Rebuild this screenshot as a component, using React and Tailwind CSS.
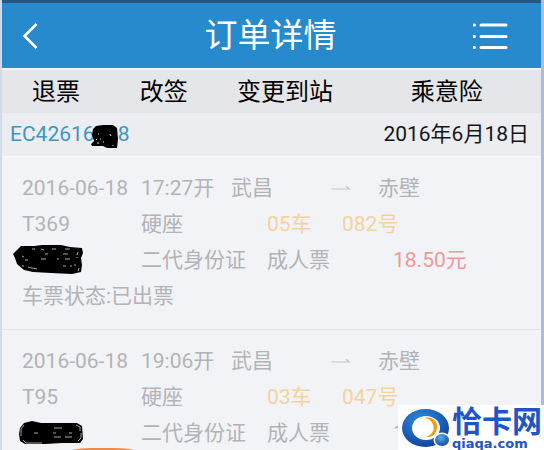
const actions = ["退票", "改签", "变更到站", "乘意险"];

const tickets = [
    {
        date: "2016-06-18",
        time: "17:27开",
        from: "武昌",
        to: "赤壁",
        train: "T369",
        seatType: "硬座",
        coach: "05车",
        seat: "082号",
        idType: "二代身份证",
        passenger: "成人票",
        price: "18.50元",
        status: "车票状态:已出票",
    },
    {
        date: "2016-06-18",
        time: "19:06开",
        from: "武昌",
        to: "赤壁",
        train: "T95",
        seatType: "硬座",
        coach: "03车",
        seat: "047号",
        idType: "二代身份证",
        passenger: "成人票",
        price: "1",
    },
];

const Arrow = () => (
    <svg className="w-5 h-2" viewBox="0 0 20 8" fill="none" stroke="#c3c4c7" strokeWidth="1.2">
        <path d="M0.5 5H18.5L15 2.2" />
    </svg>
);

// Hand-scribbled covers over private details
const NameCoverLong = () => (
    <svg className="w-[72px] h-8 -ml-[10px]" viewBox="0 0 72 32">
        <path
            d="M1 10L5 6L9 2L22 2L30 1L49 1L58 3L70 4L71 9L69 14L70 21L69 28L60 30L39 29L21 28L12 26L5 20L3 14Z"
            fill="#000"
        />
        <path
            d="M20 5h3M29 5l3 1M40 5h4M53 5h5M33 10h3M51 10h5M10 12l2 1M29 15h5M45 15h2M53 15h5M13 16h3M16 23l4 1l5 1M51 22h3M58 22h2M66 8l-1 3M65 13v1M63 20v2M67 24l-1 3M10 22h2"
            stroke="#a5a5a5"
            strokeWidth="1"
            fill="none"
        />
    </svg>
);

const NameCoverShort = () => (
    <svg className="w-16 h-6 -ml-[3px]" viewBox="0 0 64 24">
        <path
            d="M1 7L5 2L13 0L22 2L58 2L63 5L64 18L61 22L43 22L26 23L6 23L1 20L0 13Z"
            fill="#000"
        />
        <path
            d="M5 4L2 8V15M4 19L7 22H23M15 12h4M35 7h8M34 12h3M35 16h7M46 16h7M50 12h3M57 4l4 2v4M62 12v5l-3 3"
            stroke="#a5a5a5"
            strokeWidth="1"
            fill="none"
        />
    </svg>
);

const CodeCover = () => (
    <svg className="w-[28px] h-6 -ml-1 -mr-px mt-1" viewBox="0 0 28 24">
        <path d="M2 4L5 1L12 0L22 0L26 3L27 14L26 23L16 23L12 21L1 21L0 19L3 16L1 10Z" fill="#000" />
        <path d="M7 9h1M19 9l1 2M5 14l1 1M9 14h1M6 18h2M12 17h1M22 20v1" stroke="#e5e5e5" strokeWidth="1" />
    </svg>
);

const Ticket = ({ ticket, cover }) => (
    <section className="pt-[13px] pl-5 text-[21px] leading-9 text-[#b2b3b6]">
        <div className="flex h-9 items-center">
            <span className="w-[119px] shrink-0">{ticket.date}</span>
            <span className="w-[90px] shrink-0">{ticket.time}</span>
            <span className="w-[100px] shrink-0">{ticket.from}</span>
            <span className="w-[47px] shrink-0">
                <Arrow />
            </span>
            <span>{ticket.to}</span>
        </div>
        <div className="flex h-9 items-center">
            <span className="w-[119px] shrink-0">{ticket.train}</span>
            <span className="w-[126px] shrink-0">{ticket.seatType}</span>
            <span className="w-[75px] shrink-0 text-[#f3d39c]">{ticket.coach}</span>
            <span className="text-[#f3d39c]">{ticket.seat}</span>
        </div>
        <div className="flex h-9 items-center">
            <span className="w-[119px] shrink-0">{cover}</span>
            <span className="w-[126px] shrink-0">{ticket.idType}</span>
            <span className="w-[126px] shrink-0">{ticket.passenger}</span>
            <span className={ticket.status ? "text-[#ea9a98]" : "text-[#b2b3b6]"}>{ticket.price}</span>
        </div>
        {ticket.status && <p>{ticket.status}</p>}
    </section>
);

const SiteMark = () => (
    <div className="absolute right-0 bottom-0 flex h-[45px] items-center bg-white pl-1 pr-[2px]">
        <svg className="w-[50px] h-10" viewBox="0 0 50 40">
            <defs>
                <radialGradient id="ring" cx="0.4" cy="0.3" r="0.75">
                    <stop offset="0" stopColor="#2f8ad8" />
                    <stop offset="0.6" stopColor="#1c5fb8" />
                    <stop offset="1" stopColor="#123f93" />
                </radialGradient>
                <radialGradient id="ball" cx="0.4" cy="0.3" r="0.7">
                    <stop offset="0" stopColor="#54b0ea" />
                    <stop offset="1" stopColor="#124c9f" />
                </radialGradient>
            </defs>
            <ellipse cx="23.5" cy="20" rx="23.5" ry="19" fill="url(#ring)" />
            <ellipse cx="24" cy="20" rx="14" ry="12" fill="#fff" />
            <path d="M22 10C30 8 36 13 35 20C34.5 26 30 29.5 24 29C30 27 32.500 22 31.500 18C30.500 13.500 27 10.500 22 10Z" fill="#f39a16" />
            <ellipse cx="40" cy="32" rx="8.500" ry="7.500" fill="#fff" />
            <ellipse cx="40" cy="32" rx="7" ry="6" fill="url(#ball)" />
        </svg>
        <div className="flex flex-col text-[#1f55c4]">
            <span className="text-[30px] leading-8 font-bold">恰卡网</span>
            <span className="font-['DejaVu_Sans'] text-[13px] leading-3 font-bold">qiaqa.com</span>
        </div>
    </div>
);

export default function App() {
    return (
        <div className="relative h-screen overflow-hidden font-[Roboto,'Noto_Sans_CJK_SC',sans-serif]">
            <div className="min-h-screen border-l-2 border-r-[3px] border-l-[#d0dbe9] border-r-[#aebbd0] bg-[#f2f3f6]">
                <header className="flex h-[70px] items-center justify-between border-t-[3px] border-b-2 border-t-[#2b5580] border-b-[#eaf4fb] bg-[#278acd] pl-5 pr-8 text-white">
                    <button type="button" aria-label="返回" className="w-[46px]">
                        <svg className="w-4 h-7" viewBox="0 0 16 28" fill="none" stroke="currentColor" strokeWidth="2.5">
                            <path d="M14.500 2L2.500 14L14.500 26" />
                        </svg>
                    </button>
                    <h1 className="text-[33px] leading-10">订单详情</h1>
                    <button type="button" aria-label="菜单" className="flex justify-end">
                        <svg className="w-9 h-7" viewBox="0 0 36 28" stroke="currentColor" strokeWidth="3" strokeLinecap="round">
                            <path d="M1 3h.5M8 3h25M1 14.500h.5M8 14.500h25M1 25.500h.5M8 25.500h25" />
                        </svg>
                    </button>
                </header>

                <nav className="grid h-[43px] grid-cols-[4fr_4fr_5fr_7fr] bg-[#e5e6ea] text-2xl text-black">
                    {actions.map((label) => (
                        <button key={label} type="button" className="whitespace-nowrap">
                            {label}
                        </button>
                    ))}
                </nav>

                <div className="flex h-11 items-center justify-between border-b border-[#f7f8fa] bg-[#ecedf1] pl-2 pr-3 text-[21px]">
                    <span className="flex items-center text-[#3e95bf]">
                        EC42616
                        <CodeCover />8
                    </span>
                    <time dateTime="2016-06-18" className="text-[#151515]">
                        2016年6月18日
                    </time>
                </div>

                <main>
                    <div className="border-b border-[#e3e5e9] pb-[15px]">
                        <Ticket ticket={tickets[0]} cover={<NameCoverLong />} />
                    </div>
                    <Ticket ticket={tickets[1]} cover={<NameCoverShort />} />
                </main>
            </div>

            <svg className="absolute bottom-0 left-[72px] w-[62px] h-[2px]" viewBox="0 0 62 2">
                <path d="M0 2Q8 0 20 0H42Q54 0 62 2Z" fill="#ee8a45" />
            </svg>
            <SiteMark />
        </div>
    );
}
